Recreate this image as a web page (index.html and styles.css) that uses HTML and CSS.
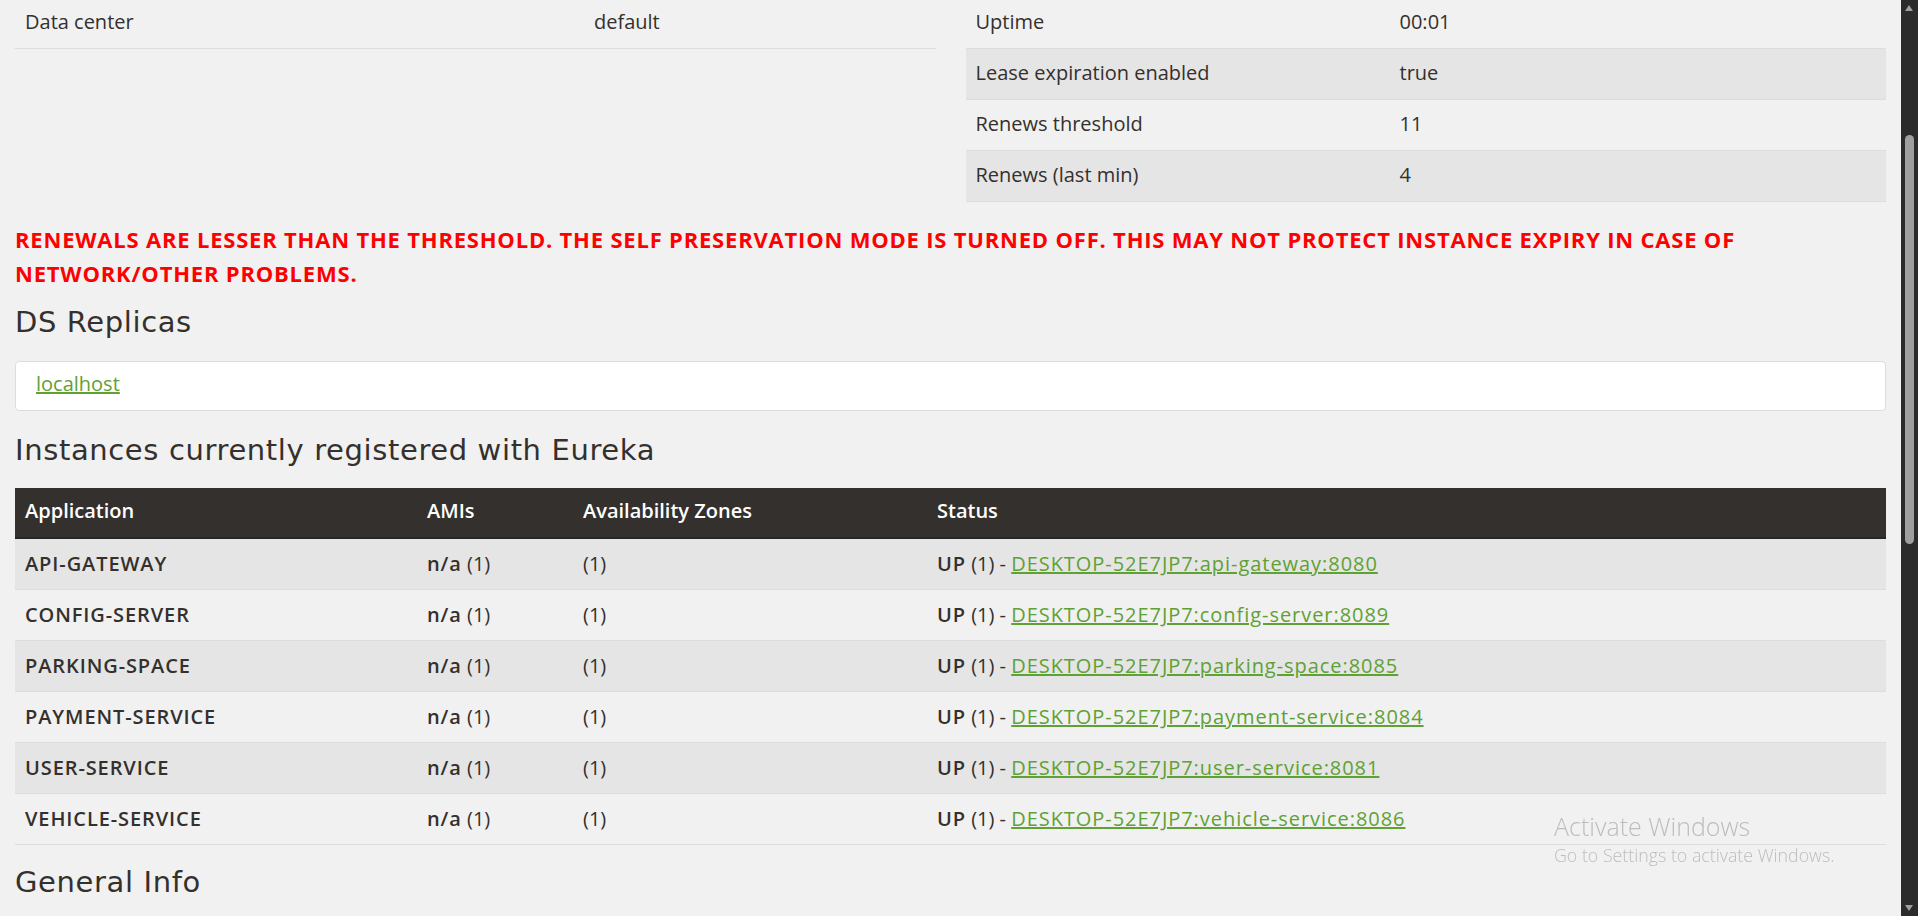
FILE: index.html
```html
<!DOCTYPE html>
<html lang="en">
<head>
<meta charset="utf-8">
<title>Eureka</title>
<link rel="stylesheet" href="styles.css">
</head>
<body>
<div class="page">
  <div class="status">
    <div class="col">
      <table class="info info-left">
        <tbody>
          <tr><td>Data center</td><td>default</td></tr>
        </tbody>
      </table>
    </div>
    <div class="col">
      <table class="info info-right">
        <tbody>
          <tr><td>Uptime</td><td>00:01</td></tr>
          <tr><td>Lease expiration enabled</td><td>true</td></tr>
          <tr><td>Renews threshold</td><td>11</td></tr>
          <tr><td>Renews (last min)</td><td>4</td></tr>
        </tbody>
      </table>
    </div>
  </div>

  <h4 class="warn">RENEWALS ARE LESSER THAN THE THRESHOLD. THE SELF PRESERVATION MODE IS TURNED OFF. THIS MAY NOT PROTECT INSTANCE EXPIRY IN CASE OF NETWORK/OTHER PROBLEMS.</h4>

  <h2 class="heading heading-ds">DS Replicas</h2>
  <ul class="replicas">
    <li><a href="#">localhost</a></li>
  </ul>

  <h2 class="heading heading-inst">Instances currently registered with Eureka</h2>
  <table class="apps">
    <thead>
      <tr><th>Application</th><th>AMIs</th><th>Availability Zones</th><th>Status</th></tr>
    </thead>
    <tbody>
      <tr><td><b>API-GATEWAY</b></td><td><b>n/a</b> (1)</td><td>(1)</td><td><b>UP</b> (1) - <a href="#">DESKTOP-52E7JP7:api-gateway:8080</a></td></tr>
      <tr><td><b>CONFIG-SERVER</b></td><td><b>n/a</b> (1)</td><td>(1)</td><td><b>UP</b> (1) - <a href="#">DESKTOP-52E7JP7:config-server:8089</a></td></tr>
      <tr><td><b>PARKING-SPACE</b></td><td><b>n/a</b> (1)</td><td>(1)</td><td><b>UP</b> (1) - <a href="#">DESKTOP-52E7JP7:parking-space:8085</a></td></tr>
      <tr><td><b>PAYMENT-SERVICE</b></td><td><b>n/a</b> (1)</td><td>(1)</td><td><b>UP</b> (1) - <a href="#">DESKTOP-52E7JP7:payment-service:8084</a></td></tr>
      <tr><td><b>USER-SERVICE</b></td><td><b>n/a</b> (1)</td><td>(1)</td><td><b>UP</b> (1) - <a href="#">DESKTOP-52E7JP7:user-service:8081</a></td></tr>
      <tr><td><b>VEHICLE-SERVICE</b></td><td><b>n/a</b> (1)</td><td>(1)</td><td><b>UP</b> (1) - <a href="#">DESKTOP-52E7JP7:vehicle-service:8086</a></td></tr>
    </tbody>
  </table>

  <h2 class="heading heading-gen">General Info</h2>
</div>

<div class="scrollbar">
  <div class="sb-arrow sb-up"></div>
  <div class="sb-thumb"></div>
  <div class="sb-arrow sb-down"></div>
</div>

<div class="activate">
  <div class="act-title">Activate Windows</div>
  <div class="act-sub">Go to Settings to activate Windows.</div>
</div>
</body>
</html>
```

FILE: styles.css
```css
html, body {
  margin: 0;
  padding: 0;
  height: 100%;
  overflow: hidden;
  background: #f1f1f1;
}

body {
  font-family: "Open Sans", "Noto Sans", sans-serif;
  font-size: 20px;
  line-height: 30px;
  color: #34302d;
}

.page {
  width: 1871px;
  padding: 0 15px;
}

a {
  color: #5fa134;
  text-decoration: underline;
}

/* status tables (page is scrolled: first visible row starts above the top edge) */
.status {
  display: flex;
  gap: 30px;
  margin-top: -3px;
}

.status .col {
  flex: 1 1 0;
  min-width: 0;
}

table {
  border-collapse: collapse;
  border-spacing: 0;
  width: 100%;
  table-layout: fixed;
}

.info {
  border-bottom: 1px solid #dddddd;
}

.info td {
  border-top: 1px solid #dddddd;
  padding: 9px 10px 11px;
  height: 30px;
  box-sizing: content-box;
  vertical-align: top;
  white-space: nowrap;
  overflow: hidden;
}

.info tbody tr:nth-child(even),
.apps tbody tr:nth-child(odd) {
  background: #e5e5e5;
}

.info-left td:first-child { width: 549px; }
.info-right td:first-child { width: 404px; }

/* warning */
.warn {
  margin: 20px 0 0;
  font-size: 22px;
  line-height: 34px;
  font-weight: 700;
  letter-spacing: 0.8px;
  color: #ff0000;
}

/* headings */
.heading {
  font-family: "DejaVu Sans", "Open Sans", sans-serif;
  font-weight: 400;
  font-size: 29px;
  line-height: 32px;
  letter-spacing: 0.62px;
  color: #34302d;
  margin: 0;
}

.heading-ds { margin-top: 16px; }
.heading-inst { margin-top: 23px; }
.heading-gen { margin-top: 21px; }

/* replicas */
.replicas {
  list-style: none;
  margin: 23px 0 0;
  padding: 0;
}

.replicas li {
  background: #ffffff;
  border: 1px solid #dddddd;
  border-radius: 4px;
  padding: 7px 20px 11px;
}

/* apps table */
.apps {
  margin-top: 22px;
  border-bottom: 1px solid #dddddd;
}

.apps th {
  background: #34302d;
  color: #ffffff;
  font-weight: 600;
  text-align: left;
  padding: 8px 10px 11px;
  height: 30px;
  box-sizing: content-box;
  border-bottom: 2px solid #27252a;
}

.apps td {
  border-top: 1px solid #dddddd;
  padding: 10px 10px 10px;
  height: 30px;
  box-sizing: content-box;
  vertical-align: top;
  white-space: nowrap;
  overflow: hidden;
}

.apps th:nth-child(1) { width: 382px; }
.apps th:nth-child(2) { width: 136px; }
.apps th:nth-child(3) { width: 334px; }

.apps b {
  font-weight: 600;
  letter-spacing: 0.9px;
}

.apps td a {
  letter-spacing: 0.95px;
}

/* fake browser scrollbar */
.scrollbar {
  position: fixed;
  top: 0;
  right: 0;
  width: 17px;
  height: 916px;
  background: #2b2b2b;
}

.sb-thumb {
  position: absolute;
  left: 4px;
  top: 135px;
  width: 9px;
  height: 409px;
  border-radius: 5px;
  background: #9f9f9f;
}

.sb-arrow {
  position: absolute;
  left: 4px;
  width: 0;
  height: 0;
  border-left: 4.5px solid transparent;
  border-right: 4.5px solid transparent;
}

.sb-up {
  top: 5px;
  border-bottom: 6px solid #9f9f9f;
}

.sb-down {
  bottom: 5px;
  border-top: 6px solid #9f9f9f;
}

/* windows watermark */
.activate {
  position: fixed;
  left: 1554px;
  top: 810px;
  color: #bdbdbd;
  font-family: "Open Sans", "Noto Sans", sans-serif;
  font-weight: 300;
}

.act-title {
  font-size: 25px;
  line-height: 32px;
}

.act-sub {
  font-size: 17.8px;
  line-height: 24px;
  margin-top: 1px;
}
```
